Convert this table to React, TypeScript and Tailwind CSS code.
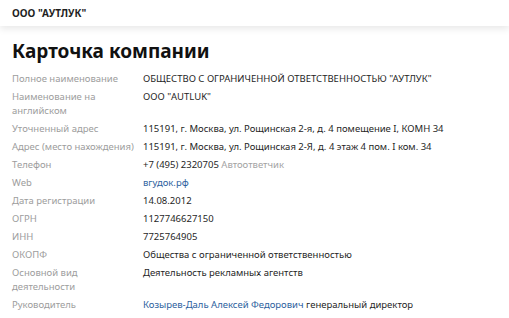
import type { ReactNode } from 'react';

type Row = {
  label: string;
  value: ReactNode;
};

const rows: Row[] = [
  { label: 'Полное наименование', value: 'ОБЩЕСТВО С ОГРАНИЧЕННОЙ ОТВЕТСТВЕННОСТЬЮ "АУТЛУК"' },
  { label: 'Наименование на английском', value: 'ООО "AUTLUK"' },
  { label: 'Уточненный адрес', value: '115191, г. Москва, ул. Рощинская 2-я, д. 4 помещение I, КОМН 34' },
  { label: 'Адрес (место нахождения)', value: '115191, г. Москва, ул. Рощинская 2-Я, д. 4 этаж 4 пом. I ком. 34' },
  {
    label: 'Телефон',
    value: (
      <>
        +7 (495) 2320705 <span className="text-[#a3a3a3]">Автоответчик</span>
      </>
    ),
  },
  { label: 'Web', value: <a className="text-[#2d5f9e]">вгудок.рф</a> },
  { label: 'Дата регистрации', value: '14.08.2012' },
  { label: 'ОГРН', value: '1127746627150' },
  { label: 'ИНН', value: '7725764905' },
  { label: 'ОКОПФ', value: 'Общества с ограниченной ответственностью' },
  { label: 'Основной вид деятельности', value: 'Деятельность рекламных агентств' },
  {
    label: 'Руководитель',
    value: (
      <>
        <a className="text-[#2d5f9e]">Козырев-Даль Алексей Федорович</a> генеральный директор
      </>
    ),
  },
];

export default function App() {
  return (
    <div className="min-h-[318px] bg-white font-['Noto_Sans',sans-serif] text-[#1f1f1f]">
      <header className="relative flex h-[26px] items-center px-3 text-[10px] font-bold shadow-[0_3px_7px_rgba(0,0,0,0.09)]">
        ООО "АУТЛУК"
      </header>

      <main className="px-3 pt-[13px]">
        <h1 className="text-[19px] font-bold leading-[24px] text-[#111]">Карточка компании</h1>

        <dl className="mt-[7px] text-[9.5px] leading-[14px]">
          {rows.map((row) => (
            <div key={row.label} className="flex py-[2px]">
              <dt className="w-[131px] shrink-0 pr-2 text-[#9d9d9d]">{row.label}</dt>
              <dd>{row.value}</dd>
            </div>
          ))}
        </dl>
      </main>
    </div>
  );
}
